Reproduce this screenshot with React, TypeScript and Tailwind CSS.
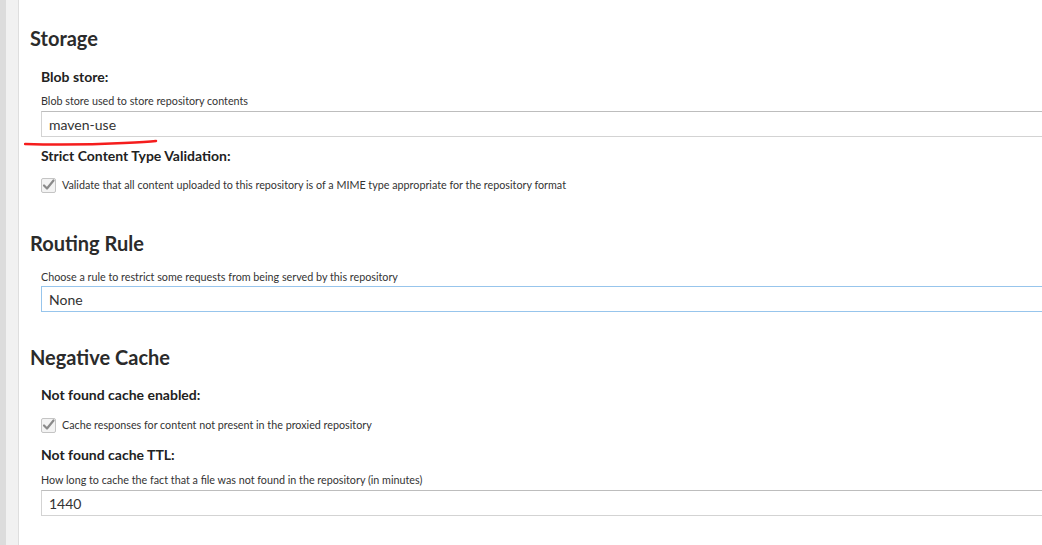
import React from "react";

const CheckBox = () => (
  <svg width="15" height="15" viewBox="0 0 15 15" className="shrink-0">
    <rect x="0.5" y="0.5" width="14" height="14" rx="1.5" fill="#f3f3f3" stroke="#c4c4c4" />
    <path d="M3 7.5 L6 10.5 L12.5 2.5" fill="none" stroke="#8a8a8a" strokeWidth="2.2" strokeLinecap="round" strokeLinejoin="round" />
  </svg>
);

const SectionTitle = ({ children, className }: { children: React.ReactNode; className: string }) => (
  <h2 className={`text-[20px] leading-[24px] font-bold text-[#2b2b2b] ml-[30px] ${className}`}>{children}</h2>
);

const Label = ({ children, className }: { children: React.ReactNode; className: string }) => (
  <div className={`text-[14px] leading-[18px] font-bold text-[#222] ml-[41px] ${className}`}>{children}</div>
);

const Help = ({ children, className }: { children: React.ReactNode; className: string }) => (
  <div className={`text-[10.75px] leading-[14px] text-[#333] ml-[41px] ${className}`}>{children}</div>
);

const Field = ({ value, focused, className }: { value: string; focused?: boolean; className: string }) => (
  <div
    className={`ml-[41px] h-[26px] flex items-center pl-[7px] text-[14px] text-[#333] border ${
      focused
        ? "border-[#97c5ec]"
        : "border-[#d3d3d3] border-t-[#bdbdbd]"
    } ${className}`}
  >
    {value}
  </div>
);

const CheckRow = ({ text, className }: { text: string; className: string }) => (
  <div className={`ml-[41px] flex items-center gap-[6px] h-[16px] ${className}`}>
    <CheckBox />
    <span className="text-[10.75px] text-[#333]">{text}</span>
  </div>
);

export default function App() {
  return (
    <div className="w-[1042px] h-[545px] flex bg-white overflow-hidden" style={{ fontFamily: "Lato, 'Liberation Sans', sans-serif" }}>
      <div className="w-[6px] bg-[#dcdcdc] shrink-0" />
      <div className="w-[13px] bg-[#f1f1f1] border-r border-[#dedede] shrink-0" />
      <div className="relative flex-1 -ml-[19px] pt-[26px]">
        <div className="-mr-[20px]">
          <SectionTitle className="">Storage</SectionTitle>
          <Label className="mt-[18px]">Blob store:</Label>
          <Help className="mt-[8px]">Blob store used to store repository contents</Help>
          <Field value="maven-use" className="mt-[3px]" />
          <Label className="mt-[10px]">Strict Content Type Validation:</Label>
          <CheckRow className="mt-[12px]" text="Validate that all content uploaded to this repository is of a MIME type appropriate for the repository format" />

          <SectionTitle className="mt-[38px]">Routing Rule</SectionTitle>
          <Help className="mt-[15px]">Choose a rule to restrict some requests from being served by this repository</Help>
          <Field value="None" focused className="mt-[2px]" />

          <SectionTitle className="mt-[33px]">Negative Cache</SectionTitle>
          <Label className="mt-[17px]">Not found cache enabled:</Label>
          <CheckRow className="mt-[13px]" text="Cache responses for content not present in the proxied repository" />
          <Label className="mt-[13px]">Not found cache TTL:</Label>
          <Help className="mt-[9px]">How long to cache the fact that a file was not found in the repository (in minutes)</Help>
          <Field value="1440" className="mt-[3px]" />
        </div>
        <svg className="absolute left-[24px] top-[139px]" width="134" height="8" viewBox="0 0 134 8">
          <path d="M1 5 C 30 6, 60 6, 100 4 C 115 3.5, 125 3, 132 2" fill="none" stroke="#f51d1d" strokeWidth="2.5" strokeLinecap="round" />
        </svg>
      </div>
    </div>
  );
}
